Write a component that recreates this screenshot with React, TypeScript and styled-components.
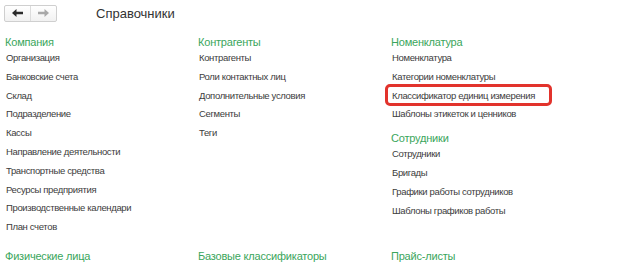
import React from 'react';
import styled, { createGlobalStyle } from 'styled-components';

const GlobalStyle = createGlobalStyle`
  body {
    margin: 0;
    background: #ffffff;
    font-family: Arial, 'Liberation Sans', sans-serif;
  }
`;

const Page = styled.div`
  width: 623px;
  height: 262px;
  padding: 4px 0 0 5px;
  box-sizing: border-box;
  overflow: hidden;
`;

const Toolbar = styled.div`
  display: flex;
  align-items: center;
  height: 18px;
  margin-left: -1px;
`;

const NavGroup = styled.div`
  display: flex;
  height: 17px;
  border: 1px solid #cfcfcf;
  border-radius: 2px;
  background: linear-gradient(#ffffff, #f1f1f1);
  box-sizing: border-box;
`;

const NavButton = styled.div<{ $divider?: boolean }>`
  width: 25px;
  display: flex;
  align-items: center;
  justify-content: center;
  border-left: ${(p) => (p.$divider ? '1px solid #dcdcdc' : 'none')};
`;

const Title = styled.div`
  margin-left: 39px;
  font-size: 13px;
  color: #333333;
  line-height: 18px;
  padding-top: 2px;
`;

const Grid = styled.div`
  display: grid;
  grid-template-columns: 193px 193px 193px;
  row-gap: 13px;
  margin-top: 14px;
`;

const Column = styled.div`
  display: flex;
  flex-direction: column;
  gap: 8px;
`;

const Group = styled.div`
  display: flex;
  flex-direction: column;
`;

const Header = styled.div`
  font-size: 11px;
  letter-spacing: -0.2px;
  line-height: 13px;
  color: #3aa65c;
  white-space: nowrap;
`;

const Item = styled.div<{ $marked?: boolean }>`
  position: relative;
  font-size: 9.5px;
  letter-spacing: -0.35px;
  line-height: 18.8px;
  height: 18.8px;
  color: #3c3c3c;
  padding-left: 1px;
  white-space: nowrap;

  &::after {
    content: '';
    display: ${(p) => (p.$marked ? 'block' : 'none')};
    position: absolute;
    left: -6px;
    top: -2.6px;
    width: 167px;
    height: 22px;
    border: 3px solid #e2332c;
    border-radius: 5px;
    box-sizing: border-box;
  }
`;

const Arrow = ({ color, flip }: { color: string; flip?: boolean }) => (
  <svg width="11" height="8" viewBox="0 0 11 8" style={{ transform: flip ? 'scaleX(-1)' : undefined }}>
    <path d="M0 4 L4.5 0 L4.5 2.8 L11 2.8 L11 5.2 L4.5 5.2 L4.5 8 Z" fill={color} />
  </svg>
);

type Section = { title: string; items: { label: string; marked?: boolean }[] };

const columns: Section[][] = [
  [
    {
      title: 'Компания',
      items: [
        'Организация',
        'Банковские счета',
        'Склад',
        'Подразделение',
        'Кассы',
        'Направление деятельности',
        'Транспортные средства',
        'Ресурсы предприятия',
        'Производственные календари',
        'План счетов',
      ].map((label) => ({ label })),
    },
  ],
  [
    {
      title: 'Контрагенты',
      items: ['Контрагенты', 'Роли контактных лиц', 'Дополнительные условия', 'Сегменты', 'Теги'].map(
        (label) => ({ label })
      ),
    },
  ],
  [
    {
      title: 'Номенклатура',
      items: [
        { label: 'Номенклатура' },
        { label: 'Категории номенклатуры' },
        { label: 'Классификатор единиц измерения', marked: true },
        { label: 'Шаблоны этикеток и ценников' },
      ],
    },
    {
      title: 'Сотрудники',
      items: ['Сотрудники', 'Бригады', 'Графики работы сотрудников', 'Шаблоны графиков работы'].map(
        (label) => ({ label })
      ),
    },
  ],
];

const bottom = ['Физические лица', 'Базовые классификаторы', 'Прайс-листы'];

export default function App() {
  return (
    <Page>
      <GlobalStyle />
      <Toolbar>
        <NavGroup>
          <NavButton>
            <Arrow color="#2b2b2b" />
          </NavButton>
          <NavButton $divider>
            <Arrow color="#a8a8a8" flip />
          </NavButton>
        </NavGroup>
        <Title>Справочники</Title>
      </Toolbar>
      <Grid>
        {columns.map((col, i) => (
          <Column key={i}>
            {col.map((sec) => (
              <Group key={sec.title}>
                <Header>{sec.title}</Header>
                {sec.items.map((it) => (
                  <Item key={it.label} $marked={it.marked}>
                    {it.label}
                  </Item>
                ))}
              </Group>
            ))}
          </Column>
        ))}
        {bottom.map((t) => (
          <Column key={t}>
            <Header>{t}</Header>
          </Column>
        ))}
      </Grid>
    </Page>
  );
}
